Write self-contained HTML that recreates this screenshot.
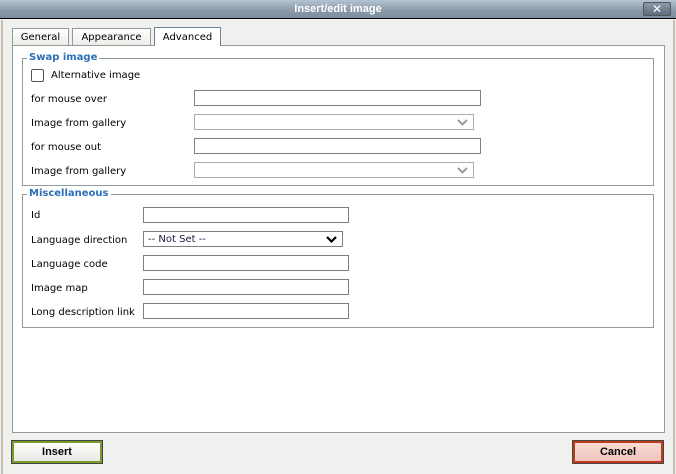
<!DOCTYPE html>
<html><head><style>
*{box-sizing:border-box;margin:0;padding:0}
body{width:676px;height:474px;background:#f0f0ee;font-family:Verdana,"DejaVu Sans",sans-serif;font-size:10px;color:#000;position:relative;overflow:hidden}
.abs{position:absolute}
#title{left:0;top:0;width:676px;height:19px;background:linear-gradient(#b4c3d1,#8898a8 60%,#7c8d9e);border-bottom:1px solid #000;color:#fff;font-weight:bold;font-size:11px;text-align:center;line-height:18px;font-family:"Liberation Sans",sans-serif}
#close{left:643px;top:2px;width:28px;height:14px;border:1px solid #555;border-radius:2px;background:linear-gradient(#8a9aaa,#5d6d7d);color:#fff;font-size:12px;font-weight:bold;text-align:center;line-height:12px}
.lb{left:1px;top:20px;width:2px;height:454px;background:#c8bdb2}
.rb{left:673px;top:20px;width:2px;height:454px;background:#c8bdb2}
.tab{top:28px;height:18px;border:1px solid #919b9c;border-bottom:none;background:linear-gradient(#fff,#ecebe6);text-align:center;line-height:18px;font-size:10px}
#panel{left:12px;top:45px;width:653px;height:388px;background:#fff;border:1px solid #919b9c}
.fs{border:1px solid #919b9c}
.lg{background:#fff;color:#2b6fb6;font-weight:bold;padding:0 2px;font-size:10px}
.lbl{font-size:10px;color:#000}
.in{border:1px solid #7f7f7f;background:#fff;height:16px}
.sel{border:1px solid #aaa;background:#fff;height:16px}
.sel svg,.in svg{position:absolute;right:5px;top:4px}
.btn{top:441px;width:90px;height:22px;border:2px solid;font-weight:bold;font-size:11px;text-align:center;line-height:18px;font-family:"Liberation Sans",sans-serif}
</style></head><body>
<div id="title" class="abs">Insert/edit image</div>
<div id="close" class="abs">✕</div>
<div class="abs lb"></div><div class="abs rb"></div>
<div class="abs tab" style="left:12px;width:57px">General</div>
<div class="abs tab" style="left:72px;width:79px">Appearance</div>
<div class="abs tab" style="left:154px;width:67px;top:27px;height:19px;background:#fff;border-color:#6d8399;z-index:2;line-height:20px">Advanced</div>
<div id="panel" class="abs"></div>
<div class="abs fs" style="left:22px;top:58px;width:632px;height:128px"></div>
<div class="abs lg" style="left:27px;top:52px">Swap image</div>
<div class="abs" style="left:31px;top:69px;width:13px;height:13px;border:1px solid #555;border-radius:2px;background:#fff"></div>
<div class="abs lbl" style="left:51px;top:70px">Alternative image</div>
<div class="abs lbl" style="left:31px;top:94px">for mouse over</div>
<div class="abs in" style="left:194px;top:90px;width:287px"></div>
<div class="abs lbl" style="left:31px;top:118px">Image from gallery</div>
<div class="abs sel" style="left:194px;top:114px;width:280px"><svg width="11" height="7"><path d="M1 1l4.5 4.5L10 1" fill="none" stroke="#999" stroke-width="2"/></svg></div>
<div class="abs lbl" style="left:31px;top:142px">for mouse out</div>
<div class="abs in" style="left:194px;top:138px;width:287px"></div>
<div class="abs lbl" style="left:31px;top:166px">Image from gallery</div>
<div class="abs sel" style="left:194px;top:162px;width:280px"><svg width="11" height="7"><path d="M1 1l4.5 4.5L10 1" fill="none" stroke="#999" stroke-width="2"/></svg></div>
<div class="abs fs" style="left:22px;top:194px;width:632px;height:134px"></div>
<div class="abs lg" style="left:27px;top:188px">Miscellaneous</div>
<div class="abs lbl" style="left:31px;top:210px">Id</div>
<div class="abs in" style="left:143px;top:207px;width:206px"></div>
<div class="abs lbl" style="left:31px;top:235px">Language direction</div>
<div class="abs in" style="left:143px;top:231px;width:200px;font-size:10px;line-height:15px;padding-left:4px;color:#1a1a40">-- Not Set --<svg width="11" height="7"><path d="M1 1l4.5 4.5L10 1" fill="none" stroke="#000" stroke-width="2.2"/></svg></div>
<div class="abs lbl" style="left:31px;top:259px">Language code</div>
<div class="abs in" style="left:143px;top:255px;width:206px"></div>
<div class="abs lbl" style="left:31px;top:283px">Image map</div>
<div class="abs in" style="left:143px;top:279px;width:206px"></div>
<div class="abs lbl" style="left:31px;top:307px">Long description link</div>
<div class="abs in" style="left:143px;top:303px;width:206px"></div>
<div class="abs btn" style="left:12px;border-color:#7a9a2a;background:linear-gradient(#fff,#e8e8e4);box-shadow:0 0 0 1px #444">Insert</div>
<div class="abs btn" style="left:573px;border-color:#c0391b;background:linear-gradient(#f8dcd6,#f0c4bb);box-shadow:0 0 0 1px #444">Cancel</div>
</body></html>
